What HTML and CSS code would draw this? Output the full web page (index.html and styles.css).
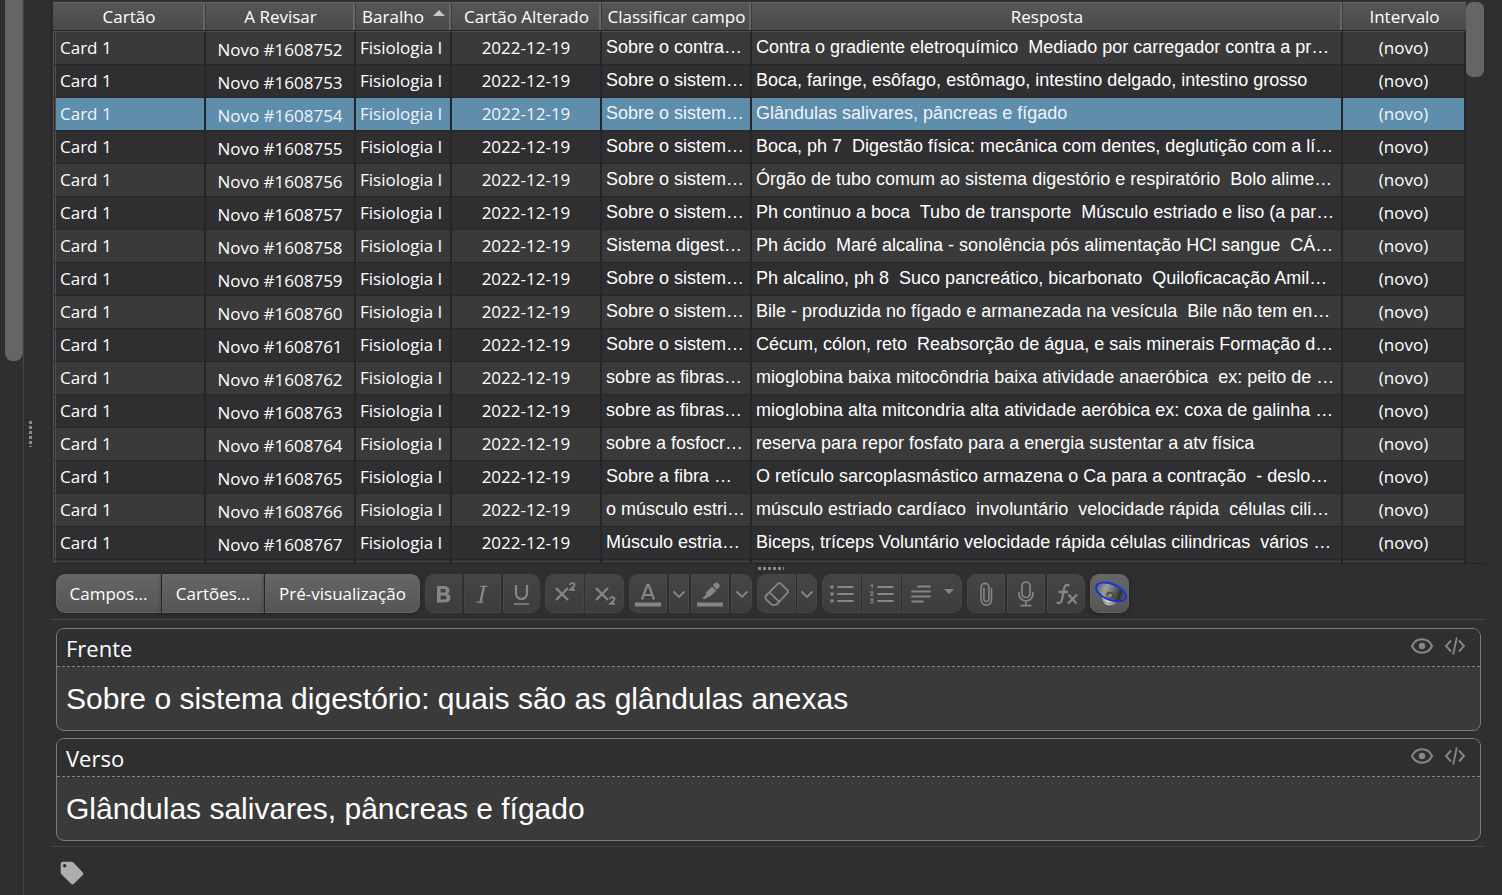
FILE: index.html
```html
<!DOCTYPE html>
<html lang="pt-BR">
<head>
<meta charset="utf-8">
<title>Painel de cartões</title>
<link rel="stylesheet" href="styles.css">
</head>
<body>
<div class="app">
  <aside class="sidebar"><div class="side-thumb"></div></aside>
  <div class="split-v"><span class="grip-v"></span></div>
  <main class="main">
    <section class="list">
      <table class="cards">
        <colgroup><col class="c-card"><col class="c-due"><col class="c-deck"><col class="c-mod"><col class="c-sort"><col><col class="c-int"></colgroup>
        <thead><tr><th>Cartão</th><th>A Revisar</th><th>Baralho<span class="sort-up"></span></th><th>Cartão Alterado</th><th>Classificar campo</th><th>Resposta</th><th>Intervalo</th></tr></thead>
        <tbody>
          <tr><td>Card 1</td><td class="due">Novo #1608752</td><td>Fisiologia I</td><td class="mid">2022-12-19</td><td class="txt">Sobre o contra…</td><td class="txt">Contra o gradiente eletroquímico  Mediado por carregador contra a pr…</td><td class="mid">(novo)</td></tr>
          <tr><td>Card 1</td><td class="due">Novo #1608753</td><td>Fisiologia I</td><td class="mid">2022-12-19</td><td class="txt">Sobre o sistem…</td><td class="txt">Boca, faringe, esôfago, estômago, intestino delgado, intestino grosso</td><td class="mid">(novo)</td></tr>
          <tr class="selected"><td>Card 1</td><td class="due">Novo #1608754</td><td>Fisiologia I</td><td class="mid">2022-12-19</td><td class="txt">Sobre o sistem…</td><td class="txt">Glândulas salivares, pâncreas e fígado</td><td class="mid">(novo)</td></tr>
          <tr><td>Card 1</td><td class="due">Novo #1608755</td><td>Fisiologia I</td><td class="mid">2022-12-19</td><td class="txt">Sobre o sistem…</td><td class="txt">Boca, ph 7  Digestão física: mecânica com dentes, deglutição com a lí…</td><td class="mid">(novo)</td></tr>
          <tr><td>Card 1</td><td class="due">Novo #1608756</td><td>Fisiologia I</td><td class="mid">2022-12-19</td><td class="txt">Sobre o sistem…</td><td class="txt">Órgão de tubo comum ao sistema digestório e respiratório  Bolo alime…</td><td class="mid">(novo)</td></tr>
          <tr><td>Card 1</td><td class="due">Novo #1608757</td><td>Fisiologia I</td><td class="mid">2022-12-19</td><td class="txt">Sobre o sistem…</td><td class="txt">Ph continuo a boca  Tubo de transporte  Músculo estriado e liso (a par…</td><td class="mid">(novo)</td></tr>
          <tr><td>Card 1</td><td class="due">Novo #1608758</td><td>Fisiologia I</td><td class="mid">2022-12-19</td><td class="txt">Sistema digest…</td><td class="txt">Ph ácido  Maré alcalina - sonolência pós alimentação HCl sangue  CÁ…</td><td class="mid">(novo)</td></tr>
          <tr><td>Card 1</td><td class="due">Novo #1608759</td><td>Fisiologia I</td><td class="mid">2022-12-19</td><td class="txt">Sobre o sistem…</td><td class="txt">Ph alcalino, ph 8  Suco pancreático, bicarbonato  Quiloficacação Amil…</td><td class="mid">(novo)</td></tr>
          <tr><td>Card 1</td><td class="due">Novo #1608760</td><td>Fisiologia I</td><td class="mid">2022-12-19</td><td class="txt">Sobre o sistem…</td><td class="txt">Bile - produzida no fígado e armanezada na vesícula  Bile não tem en…</td><td class="mid">(novo)</td></tr>
          <tr><td>Card 1</td><td class="due">Novo #1608761</td><td>Fisiologia I</td><td class="mid">2022-12-19</td><td class="txt">Sobre o sistem…</td><td class="txt">Cécum, cólon, reto  Reabsorção de água, e sais minerais Formação d…</td><td class="mid">(novo)</td></tr>
          <tr><td>Card 1</td><td class="due">Novo #1608762</td><td>Fisiologia I</td><td class="mid">2022-12-19</td><td class="txt">sobre as fibras…</td><td class="txt">mioglobina baixa mitocôndria baixa atividade anaeróbica  ex: peito de …</td><td class="mid">(novo)</td></tr>
          <tr><td>Card 1</td><td class="due">Novo #1608763</td><td>Fisiologia I</td><td class="mid">2022-12-19</td><td class="txt">sobre as fibras…</td><td class="txt">mioglobina alta mitcondria alta atividade aeróbica ex: coxa de galinha …</td><td class="mid">(novo)</td></tr>
          <tr><td>Card 1</td><td class="due">Novo #1608764</td><td>Fisiologia I</td><td class="mid">2022-12-19</td><td class="txt">sobre a fosfocr…</td><td class="txt">reserva para repor fosfato para a energia sustentar a atv física</td><td class="mid">(novo)</td></tr>
          <tr><td>Card 1</td><td class="due">Novo #1608765</td><td>Fisiologia I</td><td class="mid">2022-12-19</td><td class="txt">Sobre a fibra …</td><td class="txt">O retículo sarcoplasmástico armazena o Ca para a contração  - deslo…</td><td class="mid">(novo)</td></tr>
          <tr><td>Card 1</td><td class="due">Novo #1608766</td><td>Fisiologia I</td><td class="mid">2022-12-19</td><td class="txt">o músculo estri…</td><td class="txt">músculo estriado cardíaco  involuntário  velocidade rápida  células cili…</td><td class="mid">(novo)</td></tr>
          <tr><td>Card 1</td><td class="due">Novo #1608767</td><td>Fisiologia I</td><td class="mid">2022-12-19</td><td class="txt">Músculo estria…</td><td class="txt">Biceps, tríceps Voluntário velocidade rápida células cilindricas  vários …</td><td class="mid">(novo)</td></tr>
          <tr><td></td><td></td><td></td><td></td><td></td><td></td><td></td></tr>
        </tbody>
      </table>
      <div class="list-scroll"><div class="list-thumb"></div></div>
    </section>
    <div class="split-h"><span class="grip-h"></span></div>
    <section class="editor">
      <div class="toolbar">
        <div class="group">
          <button class="btn text w-fields">Campos...</button><button class="btn text w-cards">Cartões...</button><button class="btn text w-preview">Pré-visualização</button>
        </div>
        <div class="group wide off">
          <button class="btn w37" aria-label="Negrito"><svg width="24" height="24" viewBox="0 0 24 24"><path fill="currentColor" fill-rule="evenodd" d="M5 4h7.500c3 0 5 1.700 5 4.300 0 1.700-.8 2.900-2 3.500 1.800.6 3 2.100 3 4 0 2.900-2.200 4.700-5.500 4.700H5zM8.500 6.900v3.700h3.200c1.300 0 2.100-.7 2.100-1.900s-.8-1.800-2.100-1.800zm0 6.500v4.200h3.700c1.500 0 2.400-.8 2.400-2.100s-.9-2.100-2.400-2.100z"/></svg></button>
          <button class="btn w37" aria-label="Itálico"><svg width="24" height="24" viewBox="0 0 24 24" fill="none" stroke="currentColor"><path stroke-width="2.400" d="M13 4.500 9.500 20"/><path stroke-width="1.300" d="M9.500 4.300h7M5.500 20.200h7"/></svg></button>
          <button class="btn w37" aria-label="Sublinhado"><svg width="24" height="24" viewBox="0 0 24 24" fill="none" stroke="currentColor"><path stroke-width="2.200" d="M6 3v8.500a5.500 5.500 0 0 0 11 0V3"/><path stroke-width="1.600" d="M4 22h15"/></svg></button>
        </div>
        <div class="group off">
          <button class="btn w39" aria-label="Sobrescrito"><svg width="24" height="24" viewBox="0 0 24 24" fill="none" stroke="currentColor" stroke-width="2.400"><path d="m3 6 12 12M15 6 3 18"/><path stroke-width="1.900" d="M17 3c.3-2.500 4.500-2.500 4.500 0 0 1.500-2.500 2.700-4.300 4.800H22"/></svg></button>
          <button class="btn w39" aria-label="Subscrito"><svg width="24" height="24" viewBox="0 0 24 24" fill="none" stroke="currentColor" stroke-width="2.400"><path d="m3 6 12 12M15 6 3 18"/><path stroke-width="1.900" d="M17 17c.3-2.500 4.500-2.500 4.500 0 0 1.500-2.500 2.700-4.300 4.800H22"/></svg></button>
        </div>
        <div class="group wide off">
          <button class="btn w38" aria-label="Cor do texto"><svg width="28" height="28" viewBox="0 0 28 28" fill="none" stroke="currentColor"><path stroke-width="2.200" d="M8 19.500 13.300 5h1.400L20 19.500M9.800 15h8.400"/><path stroke-width="4" d="M1 24.500h26"/></svg></button>
          <button class="btn w20" aria-label="Escolher cor do texto"><svg width="14" height="14" viewBox="0 0 14 14" fill="none" stroke="currentColor" stroke-width="1.800"><path d="m1.500 4.500 5.500 5.500 5.500-5.500"/></svg></button>
          <button class="btn w38" aria-label="Realçar texto"><svg width="28" height="28" viewBox="0 0 28 28" fill="currentColor"><path d="M17.300 4.700 19 3c.8-.8 1.900-.8 2.700 0l1.500 1.500c.8.800.8 1.900 0 2.700l-1.700 1.700a1 1 0 0 1-1.400 0l-2.800-2.800a1 1 0 0 1 0-1.400zM16 6.500l4.200 4.200-5.900 5.500c-.8.800-1.700.8-2.400.5L9.800 18.800H6l4.200-4.400c-.4-.8-.3-1.600.4-2.300z"/><path d="M1 22.500h26v4H1z"/></svg></button>
          <button class="btn w21" aria-label="Escolher cor do realce"><svg width="14" height="14" viewBox="0 0 14 14" fill="none" stroke="currentColor" stroke-width="1.800"><path d="m1.500 4.500 5.500 5.500 5.500-5.500"/></svg></button>
        </div>
        <div class="group off">
          <button class="btn w39" aria-label="Remover formatação"><svg width="28" height="28" viewBox="0 0 28 28" fill="none" stroke="currentColor" stroke-width="1.800" stroke-linejoin="round"><path d="M3.200 15.500 15 3.700c.9-.9 1.900-.9 2.800 0l6.500 6.500c.9.900.9 1.900 0 2.800L14 24.100c-.4.500-.9.700-1.500.7H9.600c-.6 0-1.100-.2-1.500-.6l-4.900-4.900c-1.200-1.200-1.200-2.600 0-3.800zM6.500 12.300 16.300 21.800"/></svg></button>
          <button class="btn w20" aria-label="Escolher formatação"><svg width="14" height="14" viewBox="0 0 14 14" fill="none" stroke="currentColor" stroke-width="1.800"><path d="m1.500 4.500 5.500 5.500 5.500-5.500"/></svg></button>
        </div>
        <div class="group off">
          <button class="btn w39" aria-label="Lista"><svg width="26" height="24" viewBox="0 0 26 24" fill="none" stroke="currentColor" stroke-linecap="round"><path stroke-width="1.800" d="M9 5h15M9 12h15M9 19h15"/><path stroke-width="3.600" d="M3 5h.01M3 12h.01M3 19h.01"/></svg></button>
          <button class="btn w39" aria-label="Lista numerada"><svg width="26" height="24" viewBox="0 0 26 24" fill="none" stroke="currentColor" stroke-linecap="round"><path stroke-width="1.800" d="M9 5h15M9 12h15M9 19h15"/><path stroke-width="1.100" d="m1.800 3.500 1.400-.9V6M1.600 10.600c.2-1.200 2.400-1.200 2.400 0 0 .9-1.500 1.600-2.400 2.700H4M1.600 17h2.300l-1.300 1.600c1.900-.1 2 2.500-.1 2.500-.6 0-.9-.2-1-.6"/></svg></button>
          <button class="btn w60" aria-label="Alinhamento"><svg width="46" height="24" viewBox="0 0 46 24" fill="none" stroke="currentColor" stroke-width="1.800" stroke-linecap="round"><path d="M9 4.500h12M3 9.500h18M3 14.500h18M3 19.500h11"/><path fill="currentColor" stroke="none" d="M35 7h10L40 12z"/></svg></button>
        </div>
        <div class="group wide off">
          <button class="btn w38" aria-label="Anexar arquivo"><svg width="26" height="26" viewBox="0 0 26 26" fill="none" stroke="currentColor" stroke-width="1.600" stroke-linecap="round"><path d="M18.500 7.500V19a5.200 5.200 0 0 1-10.400 0V6.300a3.900 3.900 0 0 1 7.800 0V18a2.500 2.500 0 0 1-5 0V7.500"/></svg></button>
          <button class="btn w38" aria-label="Gravar áudio"><svg width="26" height="26" viewBox="0 0 26 26" fill="none" stroke="currentColor" stroke-width="1.700" stroke-linecap="round"><rect x="9" y="1" width="8" height="15.500" rx="4"/><path d="M6 11.500v1.500a7 7 0 0 0 14 0v-1.500M13 20v4.500M8 24.700h10"/></svg></button>
          <button class="btn w38" aria-label="Equações"><svg width="26" height="26" viewBox="0 0 26 26" fill="none" stroke="currentColor" stroke-width="2.300"><path d="M16.500 4.500c-2.500-1.400-4.600-.4-5.200 2.200L9 18.500c-.6 3-2.400 4-5.500 3M5.500 11h9.500M15.500 13.500l8 9M24 13.500l-9 9"/></svg></button>
        </div>
        <div class="group">
          <button class="btn w39" aria-label="Texto para fala"><svg width="36" height="32" viewBox="0 0 36 32"><defs><linearGradient id="cone" x1="0" y1="0" x2="1" y2="0"><stop offset="0" stop-color="#5c5d55"/><stop offset=".3" stop-color="#a0a194"/><stop offset=".55" stop-color="#6b6c63"/><stop offset=".8" stop-color="#33342f"/><stop offset="1" stop-color="#66675f"/></linearGradient><linearGradient id="base" x1="0" y1="0" x2="1" y2="0"><stop offset="0" stop-color="#888"/><stop offset=".4" stop-color="#d8d4d4"/><stop offset="1" stop-color="#777"/></linearGradient></defs><path fill="url(#base)" d="M9 18c1.500 3 1.500 4.500 3 7 2 3 9.500 3 12 .5l1-4z"/><path d="M12 23.500c4 2.500 8 2.800 12 1.500" fill="none" stroke="#777" stroke-width=".8"/><ellipse cx="19" cy="14" rx="15.700" ry="8" transform="rotate(22 19 14)" fill="url(#cone)" stroke="#1230f5" stroke-width="1.900"/><ellipse cx="18.500" cy="17" rx="4.200" ry="3" transform="rotate(22 18.500 17)" fill="#4a4b45"/><ellipse cx="18" cy="17.500" rx="2.200" ry="1.700" fill="#8e8f84"/></svg></button>
        </div>
      </div>
      <div class="fields">
        <div class="field">
          <div class="field-head"><label for="frente">Frente</label><span class="tools"><svg width="24" height="24" viewBox="0 0 24 24" fill="none" stroke="currentColor" stroke-width="2"><path d="M2 12c2-4.300 5.700-6.700 10-6.700S20 7.700 22 12c-2 4.300-5.700 6.700-10 6.700S4 16.300 2 12z"/><circle cx="12" cy="12" r="3.200" fill="currentColor" stroke="none"/></svg><svg width="24" height="24" viewBox="0 0 24 24" fill="none" stroke="currentColor" stroke-width="1.900"><path d="M8 6.500 3 12l5 5.500M16 6.500l5 5.500-5 5.500M13.800 3.500l-3.600 17"/></svg></span></div>
          <input class="field-text" id="frente" value="Sobre o sistema digestório: quais são as glândulas anexas">
        </div>
        <div class="field">
          <div class="field-head"><label for="verso">Verso</label><span class="tools"><svg width="24" height="24" viewBox="0 0 24 24" fill="none" stroke="currentColor" stroke-width="2"><path d="M2 12c2-4.300 5.700-6.700 10-6.700S20 7.700 22 12c-2 4.300-5.700 6.700-10 6.700S4 16.300 2 12z"/><circle cx="12" cy="12" r="3.200" fill="currentColor" stroke="none"/></svg><svg width="24" height="24" viewBox="0 0 24 24" fill="none" stroke="currentColor" stroke-width="1.900"><path d="M8 6.500 3 12l5 5.500M16 6.500l5 5.500-5 5.500M13.800 3.500l-3.600 17"/></svg></span></div>
          <input class="field-text" id="verso" value="Glândulas salivares, pâncreas e fígado">
        </div>
      </div>
      <div class="tags"><svg width="24" height="24" viewBox="0 0 24 24"><path fill="#adadad" fill-rule="evenodd" d="M3 .8h8.500c.9 0 1.500.3 2.100.9l9 9.500c1 1 1 2 0 3l-8.600 8.600c-1 1-2 1-3 0L1.600 13.600c-.6-.6-.9-1.200-.9-2V3C.7 1.600 1.600.8 3 .8zM4.700 3a1.700 1.700 0 1 0 0 3.400A1.700 1.700 0 0 0 4.700 3z"/></svg></div>
    </section>
  </main>
</div>
</body>
</html>
```
FILE: styles.css
```css
* { box-sizing: border-box; }
body {
  margin: 0;
  background: #2f2f31;
  color: #fff;
  font-family: "Open Sans", "Noto Sans", sans-serif;
  font-size: 17px;
}
.app { display: flex; height: 100vh; overflow: hidden; }
.sidebar { flex: 0 0 24px; padding-left: 5px; border-right: 1px solid #464646; }
.side-thumb { width: 18px; height: 361px; border-radius: 0 0 8px 8px; background: #656565; border-right: 1px solid #555; }
.split-v { flex: 0 0 27px; display: flex; align-items: center; padding: 0 5px 28px; }
.grip-v { width: 3px; height: 26px; background: repeating-linear-gradient(#8a8a8a 0 3px, transparent 3px 5px); }
.main { flex: 1; min-width: 0; display: flex; flex-direction: column; padding-right: 17px; }

.list { flex: 1 1 0; min-height: 0; overflow: hidden; display: flex; padding: 2px 1px 0 1px; border-bottom: 1px solid #232324; border-left: 1px solid #262627; }
.cards { flex: 1; width: 100%; table-layout: fixed; border-spacing: 0; border-collapse: separate; align-self: flex-start; }
.c-card { width: 153px; }
.c-due, .c-mod, .c-sort { width: 150px; }
.c-deck { width: 96px; }
.c-int { width: 123px; }
th {
  height: 29px; padding: 1px 0 0; overflow: hidden; white-space: nowrap; font-weight: 400; line-height: 26px;
  background: linear-gradient(#565656, #4a4a4a);
  border-top: 1px solid #686868; border-bottom: 1px solid #262626;
  border-right: 1px solid #3c3c3c;
  box-shadow: inset -2px 0 #666;
}
th:last-child { border-right: 0; box-shadow: none; }
.sort-up { display: inline-block; margin: 0 0 7px 9px; border: 6px solid transparent; border-top: 0; border-bottom-color: #c8c8c8; }
td {
  height: 33px; padding: 0 4px 1px; overflow: hidden; white-space: pre; line-height: 31px;
  border-right: 2px solid #262627; border-bottom: 1px solid #262627;
  background: #2f2f31; background-clip: padding-box;
}
tbody tr:first-child td { height: 34px; border-top: 1px solid #505050; }
td:first-child { border-left: 3px double #505050; }
tbody tr:nth-child(odd) td { background-color: #3a3a3a; }
tbody tr.selected td { background-color: #5f8dac; color: #eef5fa; }
.due { padding: 3px 0 0; text-align: center; line-height: 29px; }
.mid { text-align: center; }
.txt { font-family: "Liberation Sans", Arial, sans-serif; font-size: 18px; }
.list-scroll { flex: 0 0 18px; }
.list-thumb { height: 75px; border-radius: 7px; background: #656565; }

.split-h { height: 10px; padding: 3px 0 0 5px; display: flex; justify-content: center; align-items: flex-start; }
.grip-h { width: 26px; height: 3px; background: repeating-linear-gradient(90deg, #8a8a8a 0 3px, transparent 3px 5px); }

.toolbar { display: flex; gap: 5px; padding: 0 5px 6px; border-bottom: 1px solid #454547; }
.group { display: flex; gap: 1px; }
.group.wide { gap: 2px; }
.btn {
  display: flex; align-items: center; justify-content: center; height: 39px; padding: 0;
  border: 1px solid #636363; border-top-color: #6a6a6a; background: linear-gradient(#666, #555);
  color: #fff; font-family: inherit; font-size: 17px; white-space: nowrap;
  box-shadow: 0 1px 4px #222;
}
.group > :first-child { border-top-left-radius: 9px; border-bottom-left-radius: 9px; }
.group > :last-child { border-top-right-radius: 9px; border-bottom-right-radius: 9px; }
.off .btn { color: #868686; background: linear-gradient(#454545, #3d3d3d); border-color: #464646; box-shadow: none; }
.w-fields { width: 105px; }
.w-cards { width: 102px; }
.w-preview { width: 155px; }
.w20 { width: 20px; }
.w21 { width: 21px; }
.w37 { width: 37px; }
.w38 { width: 38px; }
.w39 { width: 39px; }
.w60 { width: 60px; }
.btn svg { flex: none; }

.fields { display: flex; flex-direction: column; gap: 7px; padding: 8px 4px 5px 5px; border-bottom: 1px solid #454547; }
.field { border: 1px solid #7c7c7c; border-radius: 8px; overflow: hidden; background: #3a3a3a; }
.field-head { display: flex; justify-content: space-between; height: 38px; padding: 0 13px 0 9px; background: #2f2f31; border-bottom: 1px dashed #868686; font-size: 22px; line-height: 38px; }
.tools { display: flex; gap: 9px; padding-top: 5px; color: #868686; }
.field-text { display: block; width: 100%; height: 63px; padding: 0 9px; border: 0; background: none; color: #fff; font-family: "Liberation Sans", Arial, sans-serif; font-size: 30px; }
.tags { height: 48px; padding: 14px 9px 0; }
```
